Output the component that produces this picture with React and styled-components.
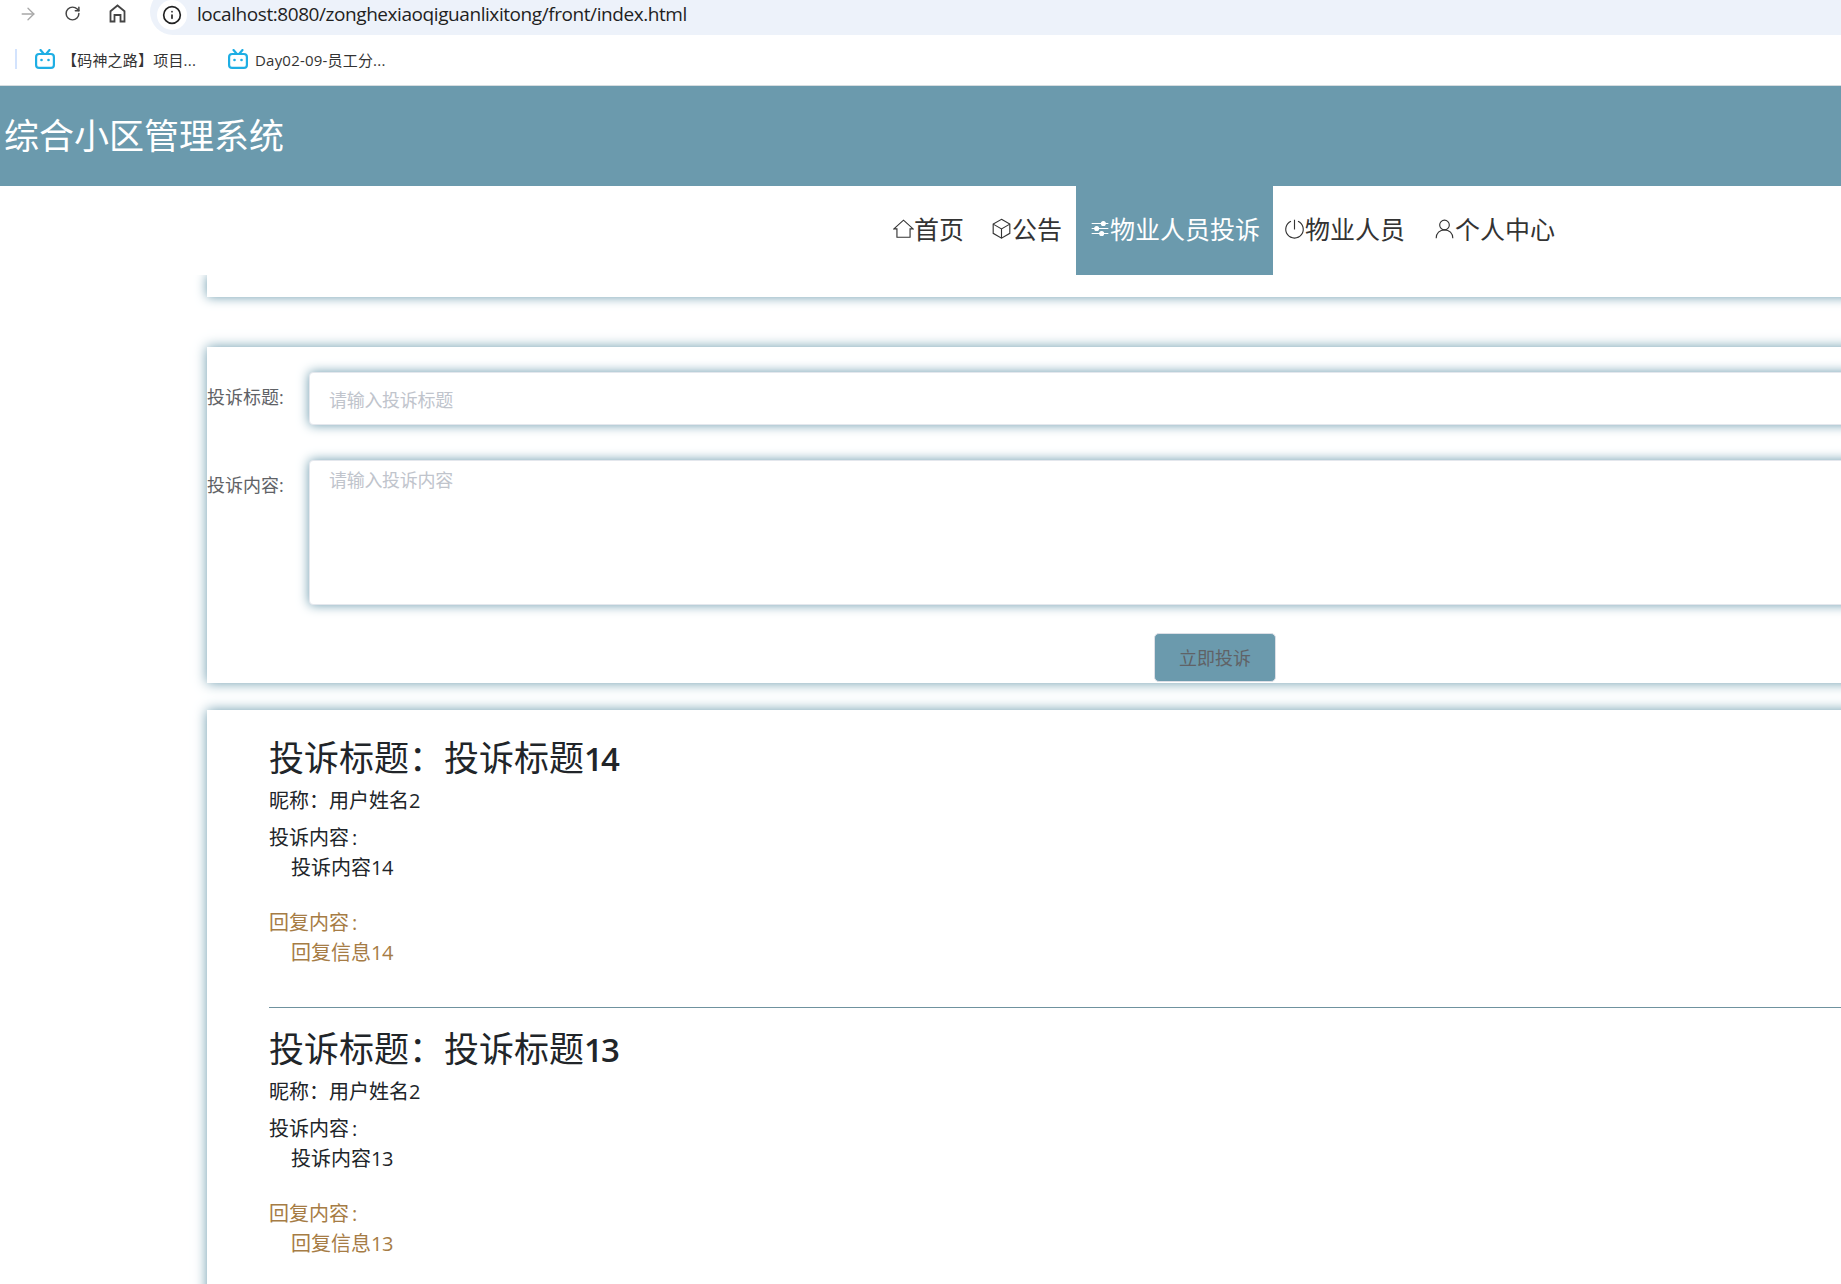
import React from 'react';
import styled, { createGlobalStyle } from 'styled-components';
import { ArrowRight, RotateCw, Info } from 'lucide-react';

const Global = createGlobalStyle`
  html, body { margin: 0; padding: 0; background: #fff; }
  #root { width: 100vw; height: 1284px; overflow: hidden; }
  * { box-sizing: border-box; }
  body { font-family: "Open Sans", "Noto Sans CJK SC", sans-serif; }
  input::placeholder, textarea::placeholder { color: #c0c4cc; }
`;

const Page = styled.div`
  width: 1841px;
  height: 1284px;
  overflow: hidden;
  display: flex;
  flex-direction: column;
  font-family: "Open Sans", "Noto Sans CJK SC", sans-serif;
`;

const AddressRow = styled.div`
  height: 35px;
  display: flex;
  align-items: flex-start;
  flex-shrink: 0;
  padding-left: 5px;
  overflow: hidden;
  color: #555;
`;
const NavGlyph = styled.span`
  width: 45px;
  height: 27px;
  display: flex;
  align-items: center;
  justify-content: center;
  color: ${p => p.$muted ? '#a8a8a8' : '#444'};
`;
const UrlPill = styled.div`
  flex: 1;
  height: 46px;
  margin: -11px 0 0 10px;
  padding: 5px 0 0 7px;
  background: #edf2fa;
  border-radius: 23px 0 0 23px;
  display: flex;
  align-items: center;
  color: #1f1f1f;
  font: 19px/35px "Open Sans", sans-serif;
  letter-spacing: -0.43px;
`;
const InfoDot = styled.span`
  width: 30px;
  height: 30px;
  border-radius: 50%;
  background: #fff;
  display: flex;
  align-items: center;
  justify-content: center;
  margin-right: 10px;
`;
const BookmarkBar = styled.div`
  height: 51px;
  flex-shrink: 0;
  display: flex;
  align-items: center;
  padding: 0 0 2px 15px;
  border-bottom: 1px solid #d6dde0;
  font: 15px "Open Sans", "Noto Sans CJK SC", sans-serif;
  letter-spacing: 0.2px;
  color: #333;
`;
const BarDivider = styled.span`
  width: 2px;
  height: 20px;
  background: #d3e3fd;
  margin-right: 18px;
`;
const Bookmark = styled.span`
  display: flex;
  align-items: center;
  gap: 7px;
  margin-right: 32px;
`;

const Banner = styled.header`
  height: 100px;
  flex-shrink: 0;
  background: #6b9aad;
  color: #fff;
  font-size: 35px;
  line-height: 100px;
  padding-left: 4px;
`;

const Nav = styled.nav`
  position: relative;
  z-index: 2;
  height: 89px;
  flex-shrink: 0;
  background: #fff;
  display: flex;
  padding-left: 880px;
`;
const NavItem = styled.a`
  display: flex;
  align-items: center;
  padding: 0 13px 6px ${p => p.$left || 13}px;
  margin-right: ${p => p.$gap || 0}px;
  font-size: 25px;
  color: ${p => p.$active ? '#fff' : '#333'};
  background: ${p => p.$active ? '#6b9aad' : 'transparent'};
`;
const NavIcon = styled.svg`
  width: ${p => p.$w || 21}px;
  height: 21px;
  flex-shrink: 0;
  margin-top: 2px;
  fill: none;
  stroke: currentColor;
  stroke-width: 1.3;
`;

const Main = styled.main`
  width: 2016px;
  margin-left: 207px;
  display: flex;
  flex-direction: column;
`;
const shadow = '0 0 12px #6b9aad';
const TopCard = styled.section`
  height: 22px;
  background: #fff;
  box-shadow: ${shadow};
  margin-bottom: 50px;
`;
const FormCard = styled.form`
  height: 336px;
  background: #fff;
  box-shadow: ${shadow};
  padding-top: 25px;
  display: flex;
  flex-direction: column;
  align-items: stretch;
  margin-bottom: 27px;
`;
const FieldRow = styled.div`
  display: flex;
  margin-bottom: ${p => p.$mb}px;
`;
const Label = styled.label`
  width: 102px;
  flex-shrink: 0;
  font-size: 18px;
  line-height: 24px;
  padding-top: ${p => p.$top}px;
  color: #606266;
`;
const fieldCss = `
  flex: 1;
  border: 1px solid #e4e7ed;
  border-radius: 4px;
  background: #fff;
  box-shadow: 0 0 12px #6b9aad;
  padding: 0 19px;
  font: 18px "Open Sans", "Noto Sans CJK SC", sans-serif;
  letter-spacing: -0.3px;
  outline: none;
`;
const TextInput = styled.input`
  ${fieldCss}
  height: 53px;
  padding-top: 2px;
`;
const TextArea = styled.textarea`
  ${fieldCss}
  height: 145px;
  padding-top: 5px;
  resize: none;
`;
const SubmitRow = styled.div`
  display: flex;
  justify-content: center;
`;
const Submit = styled.button`
  width: 122px;
  height: 49px;
  padding: 0 0 2px;
  border: 1px solid #dcdfe6;
  border-radius: 5px;
  background: #6b9aad;
  color: #606266;
  font: 18px "Open Sans", "Noto Sans CJK SC", sans-serif;
`;

const ListCard = styled.section`
  flex: 1;
  min-height: 700px;
  background: #fff;
  box-shadow: ${shadow};
  padding: 20px 0 0 62px;
`;
const Entry = styled.article`
  height: 278px;
  margin-bottom: 13px;
  color: #212529;
  border-bottom: ${p => p.$last ? 'none' : '1px solid #6f929f'};
`;
const EntryTitle = styled.h3`
  margin: 0 0 1px;
  height: 55px;
  font-size: 35px;
  line-height: 55px;
  font-weight: 400;
`;
const Line = styled.p`
  margin: 0;
  font-size: 20px;
  line-height: 30px;
  padding-left: ${p => p.$indent ? 22 : 0}px;
  margin-top: ${p => p.$mt || 0}px;
  color: ${p => p.$reply ? '#a67c45' : '#212529'};
`;
const Digits = styled.span`
  font-size: ${p => p.$big ? '33px' : 'inherit'};
  letter-spacing: ${p => p.$big ? '-2px' : '-0.4px'};
  font-weight: ${p => p.$big ? 600 : 400};
`;
const Colon = styled.span`
  margin-left: 3px;
`;

const Bili = () => (
  <svg width="20" height="20" viewBox="0 0 20 20" fill="none" stroke="#1eaee4" strokeWidth="2.2">
    <path d="M5.500 1l3 3.500M14.500 1l-3 3.500" strokeLinecap="round" />
    <rect x="1.100" y="5" width="17.800" height="13.900" rx="3" />
    <circle cx="6.500" cy="11" r="1.300" fill="#1eaee4" stroke="none" />
    <circle cx="13.500" cy="11" r="1.300" fill="#1eaee4" stroke="none" />
  </svg>
);

const ChromeHome = () => (
  <svg width="17" height="19" viewBox="0 0 17 19" fill="none" stroke="#444" strokeWidth="1.8">
    <path d="M1.500 17.500V7.200L8.500 1.500l7 5.700v10.300h-4V11h-6v6.500z" />
  </svg>
);

const entries = [{ n: 14 }, { n: 13 }];

export default function App() {
  return (
    <Page>
      <Global />
      <AddressRow>
        <NavGlyph $muted><ArrowRight size={20} strokeWidth={1.6} /></NavGlyph>
        <NavGlyph><RotateCw size={17} strokeWidth={2.1} /></NavGlyph>
        <NavGlyph><ChromeHome /></NavGlyph>
        <UrlPill>
          <InfoDot><Info size={20} strokeWidth={2} color="#222" /></InfoDot>
          localhost:8080/zonghexiaoqiguanlixitong/front/index.html
        </UrlPill>
      </AddressRow>
      <BookmarkBar>
        <BarDivider />
        <Bookmark><Bili />【码神之路】项目...</Bookmark>
        <Bookmark><Bili />Day02-09-员工分...</Bookmark>
      </BookmarkBar>
      <Banner>综合小区管理系统</Banner>
      <Nav>
        <NavItem $gap={1}>
          <NavIcon viewBox="0 0 24 24"><path d="M1 12.500 12 2.500l11 10h-3.500V22h-15v-9.500z" /></NavIcon>首页
        </NavItem>
        <NavItem $gap={1}>
          <NavIcon viewBox="0 0 24 24">
            <path d="M12 1.500 21.500 7v10.500L12 23l-9.500-5.500V7z" />
            <path d="M2.500 7 12 12.500 21.500 7M12 12.500V23" />
          </NavIcon>公告
        </NavItem>
        <NavItem $active $left={14}>
          <NavIcon $w={20} viewBox="0 0 24 24" strokeWidth="2.2">
            <path d="M2 6h20M2 12h20M2 18h20" />
            <circle cx="16" cy="6" r="2.400" fill="currentColor" />
            <circle cx="8" cy="12" r="2.400" fill="currentColor" />
            <circle cx="14" cy="18" r="2.400" fill="currentColor" />
          </NavIcon>物业人员投诉
        </NavItem>
        <NavItem $left={11} $gap={3}>
          <NavIcon viewBox="0 0 24 24"><path d="M8 3.800a10 10 0 1 0 8 0M12 2v11" /></NavIcon>物业人员
        </NavItem>
        <NavItem>
          <NavIcon viewBox="0 0 24 24"><circle cx="12" cy="8" r="5.500" /><path d="M2.500 23c0-5.500 4-9.500 9.500-9.500s9.500 4 9.500 9.500" /></NavIcon>个人中心
        </NavItem>
      </Nav>
      <Main>
        <TopCard />
        <FormCard>
          <FieldRow $mb={35}>
            <Label $top={13}>投诉标题:</Label>
            <TextInput placeholder="请输入投诉标题" />
          </FieldRow>
          <FieldRow $mb={28}>
            <Label $top={13}>投诉内容:</Label>
            <TextArea placeholder="请输入投诉内容" />
          </FieldRow>
          <SubmitRow><Submit type="button">立即投诉</Submit></SubmitRow>
        </FormCard>
        <ListCard>
          {entries.map((e, i) => (
            <Entry key={e.n} $last={i === entries.length - 1}>
              <EntryTitle>投诉标题：投诉标题<Digits $big>{e.n}</Digits></EntryTitle>
              <Line>昵称：用户姓名<Digits>2</Digits></Line>
              <Line $mt={7}>投诉内容<Colon>:</Colon></Line>
              <Line $indent>投诉内容<Digits>{e.n}</Digits></Line>
              <Line $mt={25} $reply>回复内容<Colon>:</Colon></Line>
              <Line $indent $reply>回复信息<Digits>{e.n}</Digits></Line>
            </Entry>
          ))}
        </ListCard>
      </Main>
    </Page>
  );
}
